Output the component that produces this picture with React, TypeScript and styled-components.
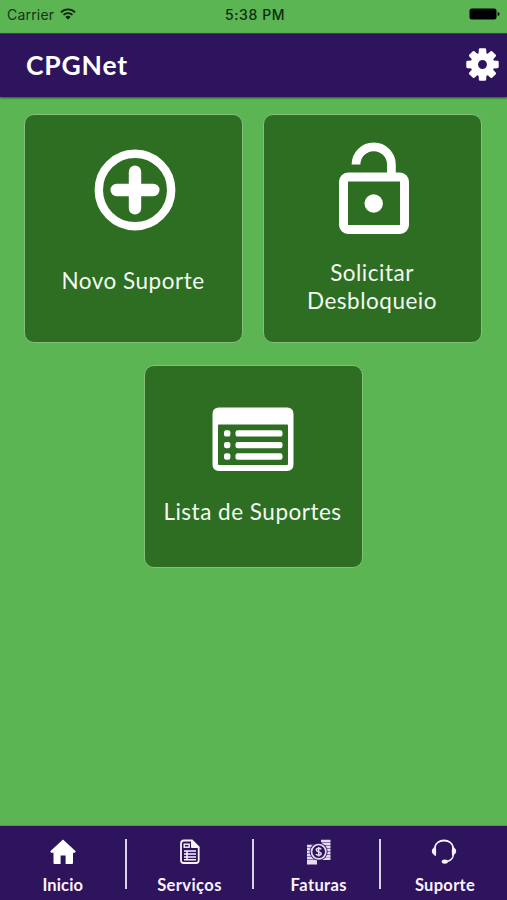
import React from "react";
import styled, { createGlobalStyle } from "styled-components";

const Global = createGlobalStyle`
  * { box-sizing: border-box; }
  body { margin: 0; background: #5ab552; }
`;

const Screen = styled.div`
  width: 507px;
  height: 900px;
  display: flex;
  flex-direction: column;
  overflow: hidden;
  background: #5ab552;
  font-family: Lato, "Open Sans", sans-serif;
  color: #fff;
`;

const StatusBar = styled.div`
  height: 33px;
  flex: none;
  display: grid;
  grid-template-columns: 1fr auto 1fr;
  align-items: center;
  padding: 0 7px 5px 7px;
  font-family: Inter, sans-serif;
  font-size: 14px;
  color: #16321a;
`;

const Carrier = styled.div`
  display: flex;
  align-items: center;
  gap: 6px;
  letter-spacing: 0.2px;
`;

const Clock = styled.div`
  font-weight: 500;
  letter-spacing: 0.6px;
  padding-left: 3px;
  color: #102a10;
`;

const Battery = styled.svg`
  justify-self: end;
  display: block;
`;

const Header = styled.header`
  height: 64px;
  flex: none;
  display: flex;
  align-items: center;
  justify-content: space-between;
  padding: 0 8px 2px 26px;
  background: #2e145d;
  border-top: 1px solid #37465b;
  box-shadow: 0 1px 2px rgba(20, 50, 30, 0.75);
`;

const Title = styled.h1`
  margin: 0;
  font-size: 26.5px;
  line-height: 32px;
  font-weight: 700;
  letter-spacing: 0.8px;
`;

const Main = styled.main`
  flex: 1;
  display: flex;
  flex-wrap: wrap;
  justify-content: center;
  align-content: flex-start;
  gap: 22px 20px;
  padding-top: 17px;
  padding-right: 1px;
`;

const Card = styled.button<{ $height: number; $iconTop: number; $iconGap: number; $iconShift?: number }>`
  width: 219px;
  height: ${(p) => p.$height}px;
  display: flex;
  flex-direction: column;
  align-items: center;
  padding: ${(p) => p.$iconTop}px 0 0;
  background: #2d6e22;
  border: 1px solid #82c07b;
  border-radius: 10px;
  color: #f3faf1;
  font-family: inherit;

  svg {
    flex: none;
    display: block;
    margin-bottom: ${(p) => p.$iconGap}px;
    margin-left: ${(p) => (p.$iconShift ?? 0) * 2}px;
  }
`;

const CardLabel = styled.span`
  font-size: 22.5px;
  line-height: 28px;
  letter-spacing: 0.5px;
  padding-right: 1px;
  text-align: center;
  white-space: pre-line;
`;

const TabBar = styled.nav`
  height: 75px;
  flex: none;
  display: grid;
  grid-template-columns: repeat(4, 127px);
  background: #2e145d;
  border-top: 1px solid #6c8278;
`;

const Tab = styled.a<{ $shift: number }>`
  display: flex;
  flex-direction: column;
  align-items: center;
  padding-top: 13px;
  position: relative;

  svg {
    display: block;
    height: 27px;
    margin-left: ${(p) => p.$shift * 2}px;
  }

  &:not(:first-child)::before {
    content: "";
    position: absolute;
    left: -2px;
    top: 13px;
    width: 2px;
    height: 50px;
    background: #dcd2ea;
  }
`;

const TabLabel = styled.span<{ $spacing: number; $shift: number; $drop?: number }>`
  margin-top: ${(p) => 8 + (p.$drop ?? 0)}px;
  margin-left: ${(p) => p.$shift * 2}px;
  font-size: 16.5px;
  line-height: 20px;
  font-weight: 700;
  color: #fbf2ff;
  letter-spacing: ${(p) => p.$spacing}px;
`;

const Wifi = () => (
  <svg width="16" height="12" viewBox="0 0 16 12" fill="none" stroke="#0b220b" strokeWidth="1.8">
    <path d="M1 4.3a10 10 0 0 1 14 0" />
    <path d="M3.5 6.9a6.4 6.4 0 0 1 9 0" />
    <path d="M8 11.6 5.4 9a3.7 3.7 0 0 1 5.2 0z" fill="#0b220b" stroke="none" />
  </svg>
);

const Gear = () => (
  <svg width="33" height="33" viewBox="-16.7 -16.7 33.4 33.4" fill="#fff">
    <path
      fillRule="evenodd"
      d="M0-12A12 12 0 1 1 0 12A12 12 0 1 1 0-12ZM0-4.5A4.5 4.5 0 1 0 0 4.5A4.5 4.5 0 1 0 0-4.5Z"
    />
    {[0, 45, 90, 135, 180, 225, 270, 315].map((a) => (
      <path key={a} transform={`rotate(${a})`} d="M-4-10L-3.7-15.2Q-3.6-16.4-2.6-16.4H2.6Q3.6-16.4 3.7-15.2L4-10Z" />
    ))}
  </svg>
);

const PlusCircle = () => (
  <svg width="82" height="82" viewBox="0 0 82 82" fill="none" stroke="#fff">
    <circle cx="41" cy="41" r="36.2" strokeWidth="8.4" />
    <path d="M41 22.7v36.6M22.7 41h36.6" strokeWidth="12.4" strokeLinecap="round" />
  </svg>
);

const OpenLock = () => (
  <svg width="72" height="94" viewBox="0 0 72 94" fill="none" stroke="#fff">
    <rect x="5.5" y="36" width="61" height="52.5" rx="4.5" strokeWidth="9" />
    <path d="M18 23.5a17.7 17.7 0 0 1 35.4 0V34" strokeWidth="8.8" />
    <circle cx="35.7" cy="62.5" r="9.2" fill="#fff" stroke="none" />
  </svg>
);

const ListPanel = () => (
  <svg width="82" height="65" viewBox="0 0 82 65" fill="#fff">
    <path
      fillRule="evenodd"
      d="M7 .5H75Q81.5 .5 81.5 7V57.5Q81.5 64 75 64H7Q.5 64 .5 57.5V7Q.5 .5 7 .5ZM7 17.5Q6 17.5 6 18.5V57Q6 58 7 58H75Q76 58 76 57V18.5Q76 17.5 75 17.5Z"
    />
    {[23.2, 34.9, 46.3].map((y) => (
      <React.Fragment key={y}>
        <rect x="12" y={y} width="6.4" height="6.4" rx="2.2" />
        <rect x="23.5" y={y} width="47" height="6.4" rx="2.2" />
      </React.Fragment>
    ))}
  </svg>
);

const Home = () => (
  <svg width="26" height="27" viewBox="0 0 26 27" fill="#fff">
    <path d="M13 .6 25.7 12.2 25 13.8H23V24Q23 25 22 25H15.6V16.5H10.6V25H4.500Q3.500 25 3.500 24V13.800H1L.3 12.200Z" />
  </svg>
);

const Invoice = () => (
  <svg width="22" height="27" viewBox="0 0 22 27" fill="none" stroke="#fbf2ff">
    <path d="M5 1.5H13L19.7 8.2V21.2Q19.7 24 17 24H4.7Q2 24 2 21.2V4.5Q2 1.5 5 1.5Z" strokeWidth="1.8" />
    <path d="M12.5 1V8.5H20Z" fill="#fbf2ff" strokeWidth="1" />
    <rect x="5.2" y="5.2" width="5" height="3" strokeWidth="1.4" />
    <path d="M5 12H17M5 15H17M5 18H17M5 20.7H17M8 11.5V21.2" strokeWidth="1.5" />
  </svg>
);

const Coins = () => (
  <svg width="26" height="27" viewBox="0 0 26 27" fill="none" stroke="#e6d9f4">
    <path d="M15 2H24.5M16 5H24.5M18 8H24.5M19 11H24.5M19 14H24.5M18 17H24.5M16 19.8H24.5" strokeWidth="2.5" />
    <path d="M1 7H9M1 10H7M1 13H7M1 16H8M1 19H10M1 22H11M1 24.3H11" strokeWidth="2.4" />
    <circle cx="12.7" cy="12.7" r="9" fill="#2e145d" stroke="none" />
    <circle cx="12.7" cy="12.7" r="7.2" strokeWidth="1.7" />
    <path d="M15.1 10.4C14.4 9 10.3 8.8 10.3 11S15.2 12.5 15.2 14.6S10.6 16.6 10 14.9M12.7 8V17.4" strokeWidth="1.5" />
  </svg>
);

const Headset = () => (
  <svg width="26" height="27" viewBox="0 0 26 27" fill="none" stroke="#fbf2ff">
    <path d="M3.600 9C4.200 4 8.500 1.500 13 1.500S21.800 4 22.400 9" strokeWidth="1.800" />
    <path d="M22.500 16C21.800 19.500 19.500 21.800 15.500 22.500" strokeWidth="1.300" />
    <path
      d="M4.800 7.800Q5.500 12 5 16.700Q3.500 17 2.600 15.500Q.8 14.600 .8 12.200Q.8 9.800 2.600 9Q3.300 7.600 4.800 7.800ZM21.200 7.800Q20.500 12 21 16.700Q22.500 17 23.400 15.500Q25.200 14.600 25.200 12.200Q25.200 9.800 23.400 9Q22.700 7.600 21.200 7.800Z"
      fill="#fbf2ff"
      stroke="none"
    />
    <ellipse cx="13.800" cy="22.600" rx="3.100" ry="2.200" fill="#fbf2ff" stroke="none" />
  </svg>
);

export default function App() {
  return (
    <Screen>
      <Global />
      <StatusBar>
        <Carrier>
          Carrier <Wifi />
        </Carrier>
        <Clock>5:38 PM</Clock>
        <Battery width="31" height="12" viewBox="0 0 31 12">
          <rect x="0.5" y="0.5" width="27" height="11" rx="2.5" fill="#000" />
          <path d="M28.7 4Q30.5 4.5 30.5 6T28.7 8Z" fill="#000" />
        </Battery>
      </StatusBar>
      <Header>
        <Title>CPGNet</Title>
        <Gear />
      </Header>
      <Main>
        <Card $height={229} $iconTop={34} $iconGap={36} $iconShift={1}>
          <PlusCircle />
          <CardLabel>Novo Suporte</CardLabel>
        </Card>
        <Card $height={229} $iconTop={26} $iconGap={24} $iconShift={1}>
          <OpenLock />
          <CardLabel>{"Solicitar\nDesbloqueio"}</CardLabel>
        </Card>
        <Card $height={203} $iconTop={41} $iconGap={26}>
          <ListPanel />
          <CardLabel>Lista de Suportes</CardLabel>
        </Card>
      </Main>
      <TabBar>
        <Tab $shift={-0.5}>
          <Home />
          <TabLabel $spacing={0.15} $shift={-0.7} $drop={0.6}>Inicio</TabLabel>
        </Tab>
        <Tab $shift={-1}>
          <Invoice />
          <TabLabel $spacing={0.4} $shift={-1} $drop={0.6}>Serviços</TabLabel>
        </Tab>
        <Tab $shift={1}>
          <Coins />
          <TabLabel $spacing={0.4} $shift={1.3} $drop={0.6}>Faturas</TabLabel>
        </Tab>
        <Tab $shift={-0.5}>
          <Headset />
          <TabLabel $spacing={0.3} $shift={0.5} $drop={1.4}>Suporte</TabLabel>
        </Tab>
      </TabBar>
    </Screen>
  );
}
